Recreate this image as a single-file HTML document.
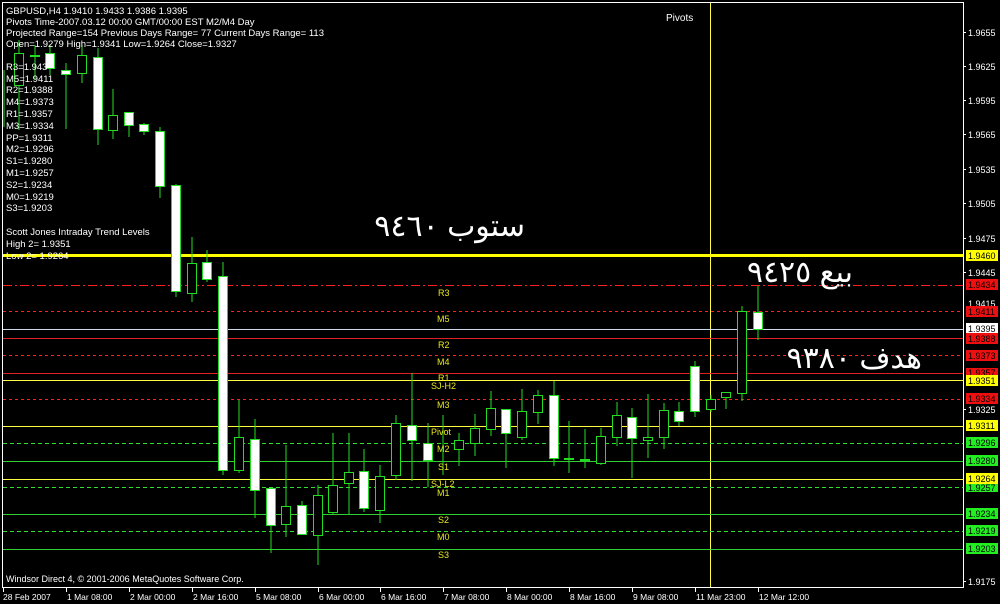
<!DOCTYPE html>
<html><head><meta charset="utf-8"><style>
html,body{margin:0;padding:0;background:#000;width:1000px;height:604px;overflow:hidden}
svg{display:block}
text{font-family:"Liberation Sans","DejaVu Sans",sans-serif}
</style></head><body>
<svg width="1000" height="604" viewBox="0 0 1000 604" xmlns="http://www.w3.org/2000/svg">
<rect width="1000" height="604" fill="#000"/>
<rect x="2.5" y="2.5" width="961" height="585" fill="none" stroke="#fff" stroke-width="1"/>
<line x1="710.5" y1="3" x2="710.5" y2="587" stroke="#ffff40" stroke-width="1"/>
<text x="666" y="21" fill="#fff" font-size="10">Pivots</text>
<g stroke-width="1" fill="none" shape-rendering="crispEdges">
<line x1="3" y1="255.5" x2="963" y2="255.5" stroke="#ffff00" stroke-width="3"/>
<line x1="3" y1="285.5" x2="963" y2="285.5" stroke="#ff2020" stroke-dasharray="9,3,2,3"/>
<line x1="3" y1="311.5" x2="963" y2="311.5" stroke="#ff2020" stroke-dasharray="3,3"/>
<line x1="3" y1="329.5" x2="963" y2="329.5" stroke="#c8d8e8"/>
<line x1="3" y1="338.5" x2="963" y2="338.5" stroke="#e02020"/>
<line x1="3" y1="355.5" x2="963" y2="355.5" stroke="#ff2020" stroke-dasharray="3,3"/>
<line x1="3" y1="373.5" x2="963" y2="373.5" stroke="#e02020"/>
<line x1="3" y1="380.5" x2="963" y2="380.5" stroke="#ffff40"/>
<line x1="3" y1="399.5" x2="963" y2="399.5" stroke="#ff2020" stroke-dasharray="3,3"/>
<line x1="3" y1="426.5" x2="963" y2="426.5" stroke="#ffff40"/>
<line x1="3" y1="443.5" x2="963" y2="443.5" stroke="#30e030" stroke-dasharray="4,3"/>
<line x1="3" y1="461.5" x2="963" y2="461.5" stroke="#30d030"/>
<line x1="3" y1="479.5" x2="963" y2="479.5" stroke="#ffff40"/>
<line x1="3" y1="487.5" x2="963" y2="487.5" stroke="#30e030" stroke-dasharray="4,3"/>
<line x1="3" y1="514.5" x2="963" y2="514.5" stroke="#30d030"/>
<line x1="3" y1="531.5" x2="963" y2="531.5" stroke="#30e030" stroke-dasharray="4,3"/>
<line x1="3" y1="549.5" x2="963" y2="549.5" stroke="#30d030"/>
</g>
<g stroke="#22dd22" stroke-width="1">
<line x1="4" y1="70" x2="4" y2="127"/>
<line x1="19" y1="40" x2="19" y2="130"/><rect x="14.5" y="53.5" width="9" height="32" fill="#000"/>
<line x1="35" y1="45" x2="35" y2="80"/><rect x="30.5" y="55.5" width="9" height="1" fill="#000"/>
<line x1="50" y1="45" x2="50" y2="75"/><rect x="45.5" y="53.5" width="9" height="15" fill="#fff"/>
<line x1="66" y1="63" x2="66" y2="129"/><rect x="61.5" y="70.5" width="9" height="4" fill="#fff"/>
<line x1="82" y1="45" x2="82" y2="83"/><rect x="77.5" y="55.5" width="9" height="18" fill="#000"/>
<line x1="98" y1="48" x2="98" y2="145"/><rect x="93.5" y="57.5" width="9" height="72" fill="#fff"/>
<line x1="113" y1="89" x2="113" y2="139"/><rect x="108.5" y="115.5" width="9" height="15" fill="#000"/>
<line x1="129" y1="112" x2="129" y2="137"/><rect x="124.5" y="112.5" width="9" height="13" fill="#fff"/>
<line x1="144" y1="123" x2="144" y2="135"/><rect x="139.5" y="124.5" width="9" height="7" fill="#fff"/>
<line x1="160" y1="127" x2="160" y2="198"/><rect x="155.5" y="131.5" width="9" height="55" fill="#fff"/>
<line x1="176" y1="184" x2="176" y2="297"/><rect x="171.5" y="185.5" width="9" height="106" fill="#fff"/>
<line x1="192" y1="237" x2="192" y2="302"/><rect x="187.5" y="263.5" width="9" height="30" fill="#000"/>
<line x1="207" y1="250" x2="207" y2="282"/><rect x="202.5" y="262.5" width="9" height="17" fill="#fff"/>
<line x1="223" y1="262" x2="223" y2="475"/><rect x="218.5" y="276.5" width="9" height="194" fill="#fff"/>
<line x1="239" y1="400" x2="239" y2="473"/><rect x="234.5" y="437.5" width="9" height="33" fill="#000"/>
<line x1="255" y1="419" x2="255" y2="518"/><rect x="250.5" y="439.5" width="9" height="51" fill="#fff"/>
<line x1="271" y1="488" x2="271" y2="553"/><rect x="266.5" y="488.5" width="9" height="37" fill="#fff"/>
<line x1="286" y1="445" x2="286" y2="537"/><rect x="281.5" y="506.5" width="9" height="18" fill="#000"/>
<line x1="302" y1="501" x2="302" y2="535"/><rect x="297.5" y="505.5" width="9" height="29" fill="#fff"/>
<line x1="318" y1="485" x2="318" y2="565"/><rect x="313.5" y="495.5" width="9" height="40" fill="#000"/>
<line x1="333" y1="433" x2="333" y2="514"/><rect x="328.5" y="485.5" width="9" height="27" fill="#000"/>
<line x1="349" y1="433" x2="349" y2="514"/><rect x="344.5" y="472.5" width="9" height="11" fill="#000"/>
<line x1="364" y1="449" x2="364" y2="512"/><rect x="359.5" y="471.5" width="9" height="37" fill="#fff"/>
<line x1="380" y1="465" x2="380" y2="523"/><rect x="375.5" y="476.5" width="9" height="34" fill="#000"/>
<line x1="396" y1="415" x2="396" y2="480"/><rect x="391.5" y="423.5" width="9" height="52" fill="#000"/>
<line x1="412" y1="373" x2="412" y2="481"/><rect x="407.5" y="425.5" width="9" height="15" fill="#fff"/>
<line x1="428" y1="423" x2="428" y2="487"/><rect x="423.5" y="443.5" width="9" height="17" fill="#fff"/>
<line x1="443" y1="415" x2="443" y2="475"/>
<line x1="459" y1="433" x2="459" y2="466"/><rect x="454.5" y="440.5" width="9" height="9" fill="#000"/>
<line x1="475" y1="414" x2="475" y2="456"/><rect x="470.5" y="428.5" width="9" height="15" fill="#000"/>
<line x1="491" y1="391" x2="491" y2="436"/><rect x="486.5" y="408.5" width="9" height="21" fill="#000"/>
<line x1="506" y1="409" x2="506" y2="468"/><rect x="501.5" y="409.5" width="9" height="24" fill="#fff"/>
<line x1="522" y1="389" x2="522" y2="440"/><rect x="517.5" y="411.5" width="9" height="26" fill="#000"/>
<line x1="538" y1="390" x2="538" y2="424"/><rect x="533.5" y="395.5" width="9" height="17" fill="#000"/>
<line x1="554" y1="381" x2="554" y2="466"/><rect x="549.5" y="395.5" width="9" height="63" fill="#fff"/>
<line x1="569" y1="421" x2="569" y2="473"/><rect x="564.5" y="458.5" width="9" height="1" fill="#000"/>
<line x1="585" y1="429" x2="585" y2="468"/><rect x="580.5" y="459.5" width="9" height="1" fill="#fff"/>
<line x1="601" y1="428" x2="601" y2="465"/><rect x="596.5" y="436.5" width="9" height="27" fill="#000"/>
<line x1="617" y1="402" x2="617" y2="446"/><rect x="612.5" y="415.5" width="9" height="22" fill="#000"/>
<line x1="632" y1="408" x2="632" y2="478"/><rect x="627.5" y="417.5" width="9" height="21" fill="#fff"/>
<line x1="648" y1="394" x2="648" y2="458"/><rect x="643.5" y="437.5" width="9" height="3" fill="#000"/>
<line x1="664" y1="403" x2="664" y2="449"/><rect x="659.5" y="410.5" width="9" height="27" fill="#000"/>
<line x1="679" y1="402" x2="679" y2="426"/><rect x="674.5" y="411.5" width="9" height="10" fill="#fff"/>
<line x1="695" y1="361" x2="695" y2="417"/><rect x="690.5" y="366.5" width="9" height="45" fill="#fff"/>
<line x1="711" y1="395" x2="711" y2="412"/><rect x="706.5" y="399.5" width="9" height="10" fill="#000"/>
<line x1="726" y1="392" x2="726" y2="409"/><rect x="721.5" y="392.5" width="9" height="5" fill="#000"/>
<line x1="742" y1="306" x2="742" y2="401"/><rect x="737.5" y="311.5" width="9" height="82" fill="#000"/>
<line x1="758" y1="286" x2="758" y2="340"/><rect x="753.5" y="312.5" width="9" height="17" fill="#fff"/>
</g>
<g fill="#e8e820" font-size="9">
<text x="438" y="296">R3</text>
<text x="437" y="322">M5</text>
<text x="438" y="348">R2</text>
<text x="437" y="365">M4</text>
<text x="438" y="381">R1</text>
<text x="431" y="389">SJ-H2</text>
<text x="437" y="408">M3</text>
<text x="431" y="435">Pivot</text>
<text x="437" y="452">M2</text>
<text x="438" y="470">S1</text>
<text x="431" y="487">SJ-L2</text>
<text x="437" y="496">M1</text>
<text x="438" y="523">S2</text>
<text x="437" y="540">M0</text>
<text x="438" y="558">S3</text>
</g>
<g fill="#fff" font-size="9.5">
<text x="6" y="14">GBPUSD,H4  1.9410 1.9433 1.9386 1.9395</text>
<text x="6" y="25">Pivots Time-2007.03.12 00:00 GMT/00:00 EST M2/M4 Day</text>
<text x="6" y="36">Projected Range=154 Previous Days Range= 77 Current Days Range= 113</text>
<text x="6" y="47">Open=1.9279 High=1.9341 Low=1.9264 Close=1.9327</text>
<text x="6" y="70">R3=1.943</text>
<text x="6" y="82">M5=1.9411</text>
<text x="6" y="93">R2=1.9388</text>
<text x="6" y="105">M4=1.9373</text>
<text x="6" y="117">R1=1.9357</text>
<text x="6" y="129">M3=1.9334</text>
<text x="6" y="141">PP=1.9311</text>
<text x="6" y="152">M2=1.9296</text>
<text x="6" y="164">S1=1.9280</text>
<text x="6" y="176">M1=1.9257</text>
<text x="6" y="188">S2=1.9234</text>
<text x="6" y="200">M0=1.9219</text>
<text x="6" y="211">S3=1.9203</text>
<text x="6" y="235">Scott Jones Intraday Trend Levels</text>
<text x="6" y="247">High 2= 1.9351</text>
<text x="6" y="259">Low 2= 1.9264</text>
<text x="6" y="582" font-size="9">Windsor Direct 4, © 2001-2006 MetaQuotes Software Corp.</text>
</g>
<g fill="#fff" font-family="DejaVu Sans, sans-serif">
<text x="525" y="236" font-size="30" text-anchor="start" direction="rtl" unicode-bidi="embed">ستوب ٩٤٦٠</text>
<text x="853" y="282" font-size="30" text-anchor="start" direction="rtl" unicode-bidi="embed">بيع ٩٤٢٥</text>
<text x="922" y="368" font-size="30" text-anchor="start" direction="rtl" unicode-bidi="embed">هدف ٩٣٨٠</text>
</g>
<g fill="#fff" font-size="9">
<g stroke="#fff"><line x1="963" y1="32.5" x2="966" y2="32.5"/><line x1="963" y1="66.5" x2="966" y2="66.5"/><line x1="963" y1="100.5" x2="966" y2="100.5"/><line x1="963" y1="134.5" x2="966" y2="134.5"/><line x1="963" y1="169.5" x2="966" y2="169.5"/><line x1="963" y1="203.5" x2="966" y2="203.5"/><line x1="963" y1="238.5" x2="966" y2="238.5"/><line x1="963" y1="272.5" x2="966" y2="272.5"/><line x1="963" y1="409.5" x2="966" y2="409.5"/><line x1="963" y1="581.5" x2="966" y2="581.5"/></g>
<text x="968" y="36">1.9655</text>
<text x="968" y="70">1.9625</text>
<text x="968" y="104">1.9595</text>
<text x="968" y="138">1.9565</text>
<text x="968" y="173">1.9535</text>
<text x="968" y="207">1.9505</text>
<text x="968" y="242">1.9475</text>
<text x="968" y="276">1.9445</text>
<text x="968" y="307">1.9415</text>
<text x="968" y="413">1.9325</text>
<text x="968" y="585">1.9175</text>
</g>
<g font-size="9" fill="#000">
<rect x="966" y="250" width="32" height="11" fill="#ffff00"/><text x="968" y="259">1.9460</text>
<rect x="966" y="279" width="32" height="11" fill="#ee1010"/><text x="968" y="288">1.9434</text>
<rect x="966" y="306" width="32" height="11" fill="#ee1010"/><text x="968" y="315">1.9411</text>
<rect x="966" y="323" width="32" height="11" fill="#fff"/><text x="968" y="332">1.9395</text>
<rect x="966" y="333" width="32" height="11" fill="#ee1010"/><text x="968" y="342">1.9388</text>
<rect x="966" y="350" width="32" height="11" fill="#ee1010"/><text x="968" y="359">1.9373</text>
<rect x="966" y="368" width="32" height="8" fill="#ee1010"/><text x="968" y="376">1.9357</text>
<rect x="966" y="375" width="32" height="11" fill="#ffff00"/><text x="968" y="384">1.9351</text>
<rect x="966" y="393" width="32" height="11" fill="#ee1010"/><text x="968" y="402">1.9334</text>
<rect x="966" y="420" width="32" height="11" fill="#ffff00"/><text x="968" y="429">1.9311</text>
<rect x="966" y="437" width="32" height="11" fill="#22ee22"/><text x="968" y="446">1.9296</text>
<rect x="966" y="455" width="32" height="11" fill="#22ee22"/><text x="968" y="464">1.9280</text>
<rect x="966" y="482" width="32" height="10" fill="#22ee22"/><text x="968" y="491">1.9257</text>
<rect x="966" y="473" width="32" height="11" fill="#ffff00"/><text x="968" y="482">1.9264</text>
<rect x="966" y="508" width="32" height="11" fill="#22ee22"/><text x="968" y="517">1.9234</text>
<rect x="966" y="525" width="32" height="11" fill="#22ee22"/><text x="968" y="534">1.9219</text>
<rect x="966" y="543" width="32" height="11" fill="#22ee22"/><text x="968" y="552">1.9203</text>
</g>
<g stroke="#fff"><line x1="3.5" y1="587" x2="3.5" y2="592"/><line x1="66.5" y1="587" x2="66.5" y2="592"/><line x1="129.5" y1="587" x2="129.5" y2="592"/><line x1="192.5" y1="587" x2="192.5" y2="592"/><line x1="255.5" y1="587" x2="255.5" y2="592"/><line x1="318.5" y1="587" x2="318.5" y2="592"/><line x1="380.5" y1="587" x2="380.5" y2="592"/><line x1="443.5" y1="587" x2="443.5" y2="592"/><line x1="506.5" y1="587" x2="506.5" y2="592"/><line x1="569.5" y1="587" x2="569.5" y2="592"/><line x1="632.5" y1="587" x2="632.5" y2="592"/><line x1="695.5" y1="587" x2="695.5" y2="592"/><line x1="758.5" y1="587" x2="758.5" y2="592"/></g>
<g fill="#fff" font-size="8.5">
<text x="3" y="600">28 Feb 2007</text>
<text x="67" y="600">1 Mar 08:00</text>
<text x="130" y="600">2 Mar 00:00</text>
<text x="193" y="600">2 Mar 16:00</text>
<text x="256" y="600">5 Mar 08:00</text>
<text x="319" y="600">6 Mar 00:00</text>
<text x="381" y="600">6 Mar 16:00</text>
<text x="444" y="600">7 Mar 08:00</text>
<text x="507" y="600">8 Mar 00:00</text>
<text x="570" y="600">8 Mar 16:00</text>
<text x="633" y="600">9 Mar 08:00</text>
<text x="696" y="600">11 Mar 23:00</text>
<text x="759" y="600">12 Mar 12:00</text>
</g>
</svg>
</body></html>
